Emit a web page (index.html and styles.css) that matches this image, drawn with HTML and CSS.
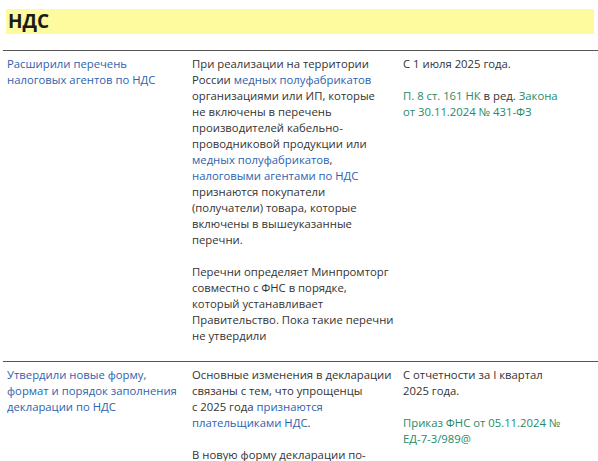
FILE: index.html
```html
<!DOCTYPE html>
<html lang="ru">
<head>
<meta charset="utf-8">
<link rel="stylesheet" href="styles.css">
</head>
<body>
<div class="page">
  <h2 class="section-title">НДС</h2>
  <div class="table">
    <div class="row">
      <div class="cell c1"><a class="blue">Расширили перечень налоговых агентов по НДС</a></div>
      <div class="cell c2">
        <p>При реализации на территории<br>России <a class="blue">медных полуфабрикатов</a><br>организациями или ИП, которые<br>не включены в перечень<br>производителей кабельно-<br>проводниковой продукции или<br><a class="blue">медных полуфабрикатов</a>,<br><a class="blue">налоговыми агентами по НДС</a><br>признаются покупатели<br>(получатели) товара, которые<br>включены в вышеуказанные<br>перечни.</p>
        <p>Перечни определяет Минпромторг<br>совместно с ФНС в порядке,<br>который устанавливает<br>Правительство. Пока такие перечни<br>не утвердили</p>
      </div>
      <div class="cell c3">
        <p>С 1 июля 2025 года.</p>
        <p><a class="green">П. 8 ст. 161 НК</a> в ред. <a class="green">Закона<br>от 30.11.2024 № 431-ФЗ</a></p>
      </div>
    </div>
    <div class="row">
      <div class="cell c1"><a class="blue">Утвердили новые форму, формат и порядок заполнения декларации по НДС</a></div>
      <div class="cell c2">
        <p>Основные изменения в декларации<br>связаны с тем, что упрощенцы<br>с 2025 года <a class="blue">признаются<br>плательщиками НДС</a>.</p>
        <p>В новую форму декларации по-</p>
      </div>
      <div class="cell c3">
        <p>С отчетности за I квартал<br>2025 года.</p>
        <p><a class="green">Приказ ФНС от 05.11.2024 №<br>ЕД-7-3/989@</a></p>
      </div>
    </div>
  </div>
</div>
</body>
</html>
```

FILE: styles.css
```css
html, body {
  margin: 0;
  padding: 0;
  background: #ffffff;
}
body {
  font-family: "Open Sans", "Noto Sans", sans-serif;
  font-size: 11.3px;
  line-height: 16px;
  color: #333333;
}
.page {
  padding: 9px 4px 0 3px;
}
.section-title {
  margin: 0 0 0 3px;
  background: #fdfb9d;
  height: 25px;
  padding-left: 2px;
  font-size: 19px;
  line-height: 25px;
  font-weight: 700;
  color: #1a1a1a;
  font-family: "Open Sans", sans-serif;
}
.table {
  margin-top: 16px;
  margin-right: -4px;
}
.row {
  display: grid;
  grid-template-columns: 189px 211px 1fr;
  border-top: 1px solid #555555;
  padding: 5px 0 17px 0;
}
.cell {
  padding: 0;
}
.c1 {
  padding-left: 4px;
  padding-right: 4px;
}
.c2,
.c3 {
  white-space: nowrap;
}
.cell p {
  margin: 0 0 16px 0;
}
.cell p:last-child {
  margin-bottom: 0;
}
a.blue {
  color: #2d62b0;
  text-decoration: none;
}
a.green {
  color: #268a68;
  text-decoration: none;
}
```
